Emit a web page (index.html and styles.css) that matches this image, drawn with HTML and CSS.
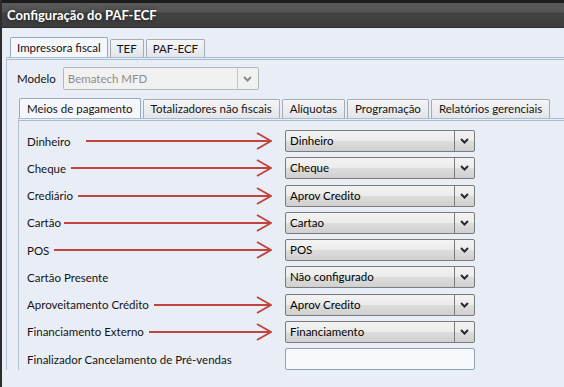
FILE: index.html
```html
<!DOCTYPE html>
<html lang="pt">
<head>
    <meta charset="UTF-8">
    <title>Configuração do PAF-ECF</title>
    <link rel="stylesheet" href="styles.css">
</head>
<body>
    <div class="window">
        <div class="titlebar">Configuração do PAF-ECF</div>
        <div class="client">
            <div class="tabs outer-tabs">
                <div class="tab active">Impressora fiscal</div>
                <div class="tab">TEF</div>
                <div class="tab">PAF-ECF</div>
            </div>
            <div class="panel outer-panel">
                <div class="model-row">
                    <span class="label">Modelo</span>
                    <div class="combo combo-disabled model-combo">
                        <span class="combo-text">Bematech MFD</span>
                        <span class="combo-btn"><svg width="9" height="6" viewBox="0 0 9 6"><polyline points="1,1 4.5,4.5 8,1"/></svg></span>
                    </div>
                </div>

                <div class="inner">
                    <div class="tabs inner-tabs">
                        <div class="tab active">Meios de pagamento</div>
                        <div class="tab">Totalizadores não fiscais</div>
                        <div class="tab">Alíquotas</div>
                        <div class="tab">Programação</div>
                        <div class="tab">Relatórios gerenciais</div>
                    </div>
                    <div class="panel inner-panel">
                        <div class="field-row">
                            <div class="field-label"><span>Dinheiro</span><span class="arrow arrow-far"><span class="arrow-line"></span><svg width="16" height="18" viewBox="0 0 16 18"><line x1="0" y1="9" x2="15" y2="9"/><polyline points="1,1 15,9 1,17"/></svg></span></div>
                            <div class="combo"><span class="combo-text">Dinheiro</span><span class="combo-btn"><svg width="9" height="6" viewBox="0 0 9 6"><polyline points="1,1 4.5,4.5 8,1"/></svg></span></div>
                        </div>
                        <div class="field-row">
                            <div class="field-label"><span>Cheque</span><span class="arrow"><span class="arrow-line"></span><svg width="16" height="18" viewBox="0 0 16 18"><line x1="0" y1="9" x2="15" y2="9"/><polyline points="1,1 15,9 1,17"/></svg></span></div>
                            <div class="combo"><span class="combo-text">Cheque</span><span class="combo-btn"><svg width="9" height="6" viewBox="0 0 9 6"><polyline points="1,1 4.5,4.5 8,1"/></svg></span></div>
                        </div>
                        <div class="field-row">
                            <div class="field-label"><span>Crediário</span><span class="arrow"><span class="arrow-line"></span><svg width="16" height="18" viewBox="0 0 16 18"><line x1="0" y1="9" x2="15" y2="9"/><polyline points="1,1 15,9 1,17"/></svg></span></div>
                            <div class="combo"><span class="combo-text">Aprov Credito</span><span class="combo-btn"><svg width="9" height="6" viewBox="0 0 9 6"><polyline points="1,1 4.5,4.5 8,1"/></svg></span></div>
                        </div>
                        <div class="field-row">
                            <div class="field-label"><span>Cartão</span><span class="arrow arrow-near"><span class="arrow-line"></span><svg width="16" height="18" viewBox="0 0 16 18"><line x1="0" y1="9" x2="15" y2="9"/><polyline points="1,1 15,9 1,17"/></svg></span></div>
                            <div class="combo"><span class="combo-text">Cartao</span><span class="combo-btn"><svg width="9" height="6" viewBox="0 0 9 6"><polyline points="1,1 4.5,4.5 8,1"/></svg></span></div>
                        </div>
                        <div class="field-row">
                            <div class="field-label"><span>POS</span><span class="arrow"><span class="arrow-line"></span><svg width="16" height="18" viewBox="0 0 16 18"><line x1="0" y1="9" x2="15" y2="9"/><polyline points="1,1 15,9 1,17"/></svg></span></div>
                            <div class="combo"><span class="combo-text">POS</span><span class="combo-btn"><svg width="9" height="6" viewBox="0 0 9 6"><polyline points="1,1 4.5,4.5 8,1"/></svg></span></div>
                        </div>
                        <div class="field-row">
                            <div class="field-label"><span>Cartão Presente</span></div>
                            <div class="combo"><span class="combo-text">Não configurado</span><span class="combo-btn"><svg width="9" height="6" viewBox="0 0 9 6"><polyline points="1,1 4.5,4.5 8,1"/></svg></span></div>
                        </div>
                        <div class="field-row">
                            <div class="field-label"><span>Aproveitamento Crédito</span><span class="arrow"><span class="arrow-line"></span><svg width="16" height="18" viewBox="0 0 16 18"><line x1="0" y1="9" x2="15" y2="9"/><polyline points="1,1 15,9 1,17"/></svg></span></div>
                            <div class="combo"><span class="combo-text">Aprov Credito</span><span class="combo-btn"><svg width="9" height="6" viewBox="0 0 9 6"><polyline points="1,1 4.5,4.5 8,1"/></svg></span></div>
                        </div>
                        <div class="field-row">
                            <div class="field-label"><span>Financiamento Externo</span><span class="arrow"><span class="arrow-line"></span><svg width="16" height="18" viewBox="0 0 16 18"><line x1="0" y1="9" x2="15" y2="9"/><polyline points="1,1 15,9 1,17"/></svg></span></div>
                            <div class="combo"><span class="combo-text">Financiamento</span><span class="combo-btn"><svg width="9" height="6" viewBox="0 0 9 6"><polyline points="1,1 4.5,4.5 8,1"/></svg></span></div>
                        </div>
                        <div class="field-row">
                            <div class="field-label"><span>Finalizador Cancelamento de Pré-vendas</span></div>
                            <div class="text-input"></div>
                        </div>
                    </div>
                </div>
            </div>
        </div>
    </div>
</body>
</html>
```

FILE: styles.css
```css
body {
    margin: 0;
    padding: 0;
    overflow: hidden;
    font-family: 'Lato', 'Open Sans', sans-serif;
    font-size: 11.5px;
    color: #141414;
    background-color: #e9edf5;
}
.window {
    height: 387px;
    border-left: 2px solid #2c2c2c;
    display: flex;
    flex-direction: column;
}
.titlebar {
    height: 28px;
    box-sizing: border-box;
    padding: 3px 0 0 5px;
    line-height: 24px;
    font-size: 13px;
    font-weight: bold;
    color: #fff;
    text-shadow: 0 0 5px rgba(0, 0, 0, 0.7);
    background: linear-gradient(#1c1c1c 0, #1c1c1c 3px, #5a5a5a 3px, #555 12px, #434343 13px, #3e3e3e 27px, #2e2e2e 27px);
}
.client {
    flex: 1;
    padding: 9px 0 0 4px;
    background-color: #e9edf5;
}
.tabs {
    display: flex;
    align-items: flex-end;
    gap: 2px;
}
.tab {
    height: 18px;
    box-sizing: border-box;
    padding: 0 6px;
    line-height: 17px;
    border: 1px solid #a3adb9;
    border-bottom: none;
    border-radius: 2px 2px 0 0;
    background: linear-gradient(#f5f5f6, #e3e5e9);
    white-space: nowrap;
}
.tab.active {
    height: 20px;
    line-height: 19px;
    background: #f5f7fb;
    border-color: #97abbf;
}
.outer-tabs {
    padding-left: 4px;
}
.panel {
    border-top: 3px double #a6bccf;
    border-left: 1px solid #b3c3d1;
}
.outer-panel {
    flex: 1;
    padding: 7px 0 0 10px;
}
.model-row {
    display: flex;
    align-items: center;
    gap: 7px;
}
.inner {
    margin: 8px 0 0 1px;
}
.inner-tabs {
    padding-left: 1px;
}
.inner-tabs .tab {
    height: 19px;
    line-height: 18px;
    padding: 0 7px;
}
.inner-tabs .tab.active {
    height: 20px;
    line-height: 19px;
}
.inner-panel {
    padding: 9px 0 0 8px;
    display: flex;
    flex-direction: column;
    gap: 5.25px;
}
.field-row {
    display: flex;
    align-items: center;
    height: 22px;
}
.field-label {
    width: 258px;
    display: flex;
    align-items: center;
    white-space: nowrap;
}
.arrow {
    flex: 1;
    display: flex;
    align-items: center;
    margin: 0 13px 0 5px;
}
.arrow-far {
    margin-left: 15px;
}
.arrow-near {
    margin-left: 3px;
}
.arrow-line {
    flex: 1;
    height: 2px;
    background-color: #c0453e;
}
.arrow svg {
    display: block;
}
.arrow svg line,
.arrow svg polyline {
    stroke: #c0453e;
    stroke-width: 2;
    fill: none;
}
.combo {
    width: 190px;
    height: 22px;
    box-sizing: border-box;
    display: flex;
    border: 1px solid #7b7b7b;
    border-radius: 2px;
    background: linear-gradient(#f3f3f3 0, #ebebeb 50%, #dddddd 50%, #d0d0d0 100%);
    color: #000;
}
.combo-text {
    flex: 1;
    padding-left: 4px;
    line-height: 20px;
}
.combo-btn {
    width: 19px;
    border-left: 1px solid #7b7b7b;
    display: flex;
    align-items: center;
    justify-content: center;
}
.combo-btn svg polyline {
    stroke: #2a2a2a;
    stroke-width: 2;
    fill: none;
}
.model-combo {
    width: 196px;
    height: 23px;
}
.model-combo .combo-text {
    line-height: 21px;
}
.model-combo .combo-btn {
    width: 20px;
}
.combo-disabled {
    border-color: #b4b8bc;
    background: #f1f1f1;
    color: #8d8d8d;
}
.combo-disabled .combo-btn {
    border-left-color: #c4c7ca;
}
.combo-disabled .combo-btn svg polyline {
    stroke: #8a8a8a;
}
.text-input {
    width: 190px;
    height: 22px;
    box-sizing: border-box;
    border: 1px solid #8ea2b6;
    border-radius: 2px;
    background-color: #f8f9fd;
}
```
